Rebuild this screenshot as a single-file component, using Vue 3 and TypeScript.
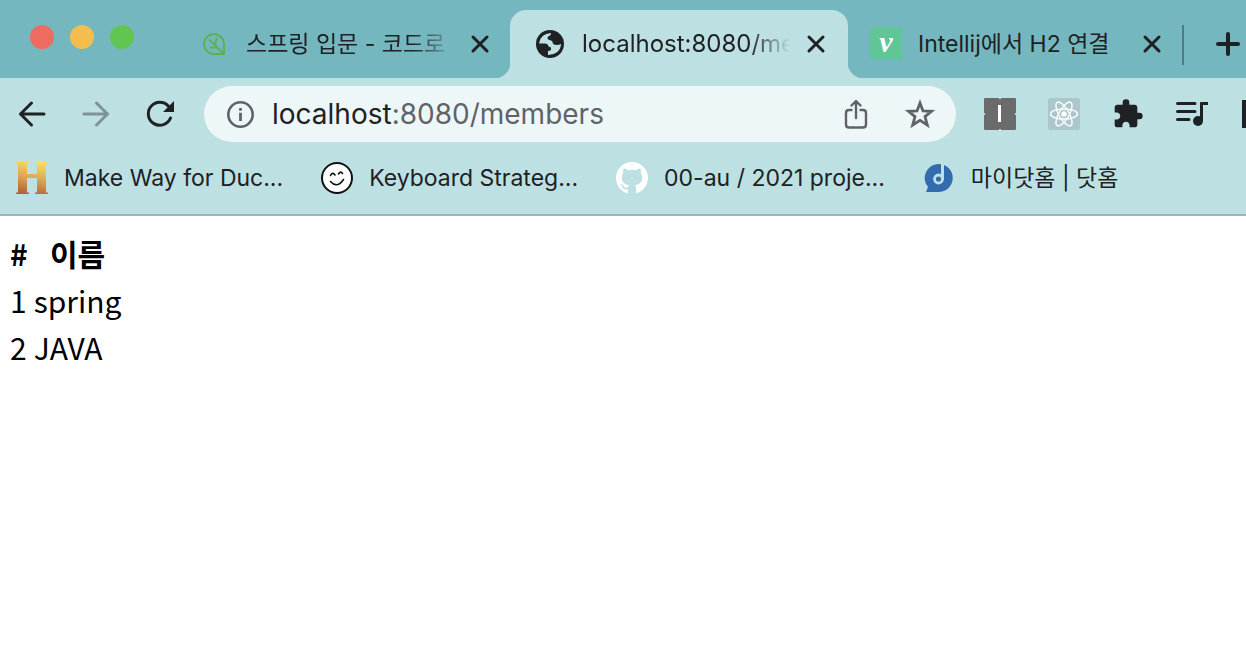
<script setup lang="ts">
interface Member { id: number; name: string }

const members: Member[] = [
  { id: 1, name: 'spring' },
  { id: 2, name: 'JAVA' },
]
</script>

<template>
  <div class="window">
    <header class="tabstrip">
      <div class="lights">
        <button class="light red" aria-label="Close window"></button>
        <button class="light amber" aria-label="Minimise window"></button>
        <button class="light green" aria-label="Zoom window"></button>
      </div>
      <div class="tab">
        <svg class="fav" viewBox="0 0 32 32" fill="none" stroke="#5cb155" stroke-width="2">
          <path d="M26 26H15.500A10 10 0 1 1 26 15.500Z" />
          <path d="M25 25L11 11.500M17 17L19 9.500M18.500 19.500H11.500" />
        </svg>
        <span class="title fade" lang="ko">스프링 입문 - 코드로 배</span>
        <button class="close" aria-label="Close tab"><svg viewBox="0 0 20 20"><path d="M3 3L17 17M17 3L3 17" /></svg></button>
      </div>
      <div class="tab active">
        <svg class="fav" viewBox="0 0 32 32">
          <circle cx="16" cy="16" r="14" fill="#202124" />
          <path d="M5 15.500Q6 6 17 5Q17 7.500 14 8.500Q12.500 11 15.500 12Q19 12.500 19 16Q23 18 27 16Q26.500 26 14 27V23Q17.500 23 17 20.500Q17 18.500 14.500 18.500Q14 15.500 11 15.500Z" fill="#bde0e2" />
        </svg>
        <span class="title fade">localhost:8080/members</span>
        <button class="close" aria-label="Close tab"><svg viewBox="0 0 20 20"><path d="M3 3L17 17M17 3L3 17" /></svg></button>
      </div>
      <div class="tab">
        <span class="fav velog">v</span>
        <span class="title" lang="ko">Intellij에서 H2 연결</span>
        <button class="close" aria-label="Close tab"><svg viewBox="0 0 20 20"><path d="M3 3L17 17M17 3L3 17" /></svg></button>
      </div>
      <span class="divider"></span>
      <button class="new" aria-label="New tab"><svg viewBox="0 0 24 24"><path d="M12 2V22M2 12H22" /></svg></button>
    </header>

    <nav class="toolbar">
      <button class="tool" aria-label="Back"><svg viewBox="0 0 32 32" class="line"><path d="M28 16H4.500M15.500 5L4.500 16L15.500 27" /></svg></button>
      <button class="tool faded" aria-label="Forward"><svg viewBox="0 0 32 32" class="line"><path d="M4 16H27.500M16.500 5L27.500 16L16.500 27" /></svg></button>
      <button class="tool" aria-label="Reload">
        <svg viewBox="0 0 32 32"><path d="M26.500 20A11.500 11.500 0 1 1 24.500 8.200" fill="none" stroke="#202124" stroke-width="3" stroke-linecap="round" /><path d="M30 3V14H19Z" fill="#202124" /></svg>
      </button>
      <div class="omnibox">
        <button class="tool" aria-label="Site information">
          <svg viewBox="0 0 32 32"><circle cx="16.500" cy="16.500" r="12.200" fill="none" stroke="#5f6368" stroke-width="2.600" /><path d="M15.100 10H17.900V12.700H15.100ZM15.100 14.700H17.900V23H15.100Z" fill="#5f6368" /></svg>
        </button>
        <div class="address" role="textbox" aria-label="Address">localhost<span>:8080/members</span></div>
        <button class="tool" aria-label="Share">
          <svg viewBox="0 0 32 32" fill="none" stroke="#5f6368" stroke-width="2.400" stroke-linecap="round" stroke-linejoin="round"><path d="M11.500 12H9Q6 12 6 15V26.500Q6 29.500 9 29.500H23Q26 29.500 26 26.500V15Q26 12 23 12H20.500M16 20V3.500M11.500 7.500L16 3L20.500 7.500" /></svg>
        </button>
        <button class="tool" aria-label="Bookmark this page">
          <svg viewBox="0 0 32 32"><path d="M16 5L19 12.900L27.500 13.300L21 18.600L23.300 27L16 22.300L8.700 27L11 18.600L4.500 13.300L13 12.900Z" fill="none" stroke="#5f6368" stroke-width="2.800" /></svg>
        </button>
      </div>
      <button class="tool" aria-label="Extension">
        <svg viewBox="0 0 32 32"><rect width="32" height="32" rx="1" fill="#6b6b6b" /><path d="M15 0H17V1H15ZM15 31H17V32H15ZM0 15H1V17H0ZM31 15H32V17H31Z" fill="#bde0e2" /><path d="M14 7H17V24H14Z" fill="#fff" /></svg>
      </button>
      <button class="tool" aria-label="React developer tools">
        <svg viewBox="0 0 32 32"><rect width="32" height="32" rx="2" fill="#abc7cc" /><g fill="none" stroke="#fff" stroke-width="1.400"><ellipse cx="16" cy="16" rx="13.500" ry="5" /><ellipse cx="16" cy="16" rx="13.500" ry="5" transform="rotate(60 16 16)" /><ellipse cx="16" cy="16" rx="13.500" ry="5" transform="rotate(120 16 16)" /></g><circle cx="16" cy="16" r="2.700" fill="#fff" /></svg>
      </button>
      <button class="tool" aria-label="Extensions">
        <svg viewBox="0 0 24 24"><path d="M20.500 11H19V7c0-1.100-.9-2-2-2h-4V3.500a2.500 2.500 0 0 0-5 0V5H4c-1.100 0-1.990.9-1.990 2v3.800H3.500c1.490 0 2.700 1.210 2.700 2.700s-1.210 2.700-2.700 2.700H2V20c0 1.100.9 2 2 2h3.800v-1.500c0-1.490 1.210-2.700 2.700-2.700s2.700 1.210 2.700 2.700V22H17c1.100 0 2-.9 2-2v-4h1.500a2.500 2.500 0 0 0 0-5z" fill="#202124" /></svg>
      </button>
      <button class="tool" aria-label="Media controls">
        <svg viewBox="0 0 32 32"><path d="M1.500 5.500H19M1.500 13.500H19M1.500 21.500H13" fill="none" stroke="#202124" stroke-width="3" stroke-linecap="round" /><circle cx="22" cy="23" r="5" fill="#202124" /><path d="M24 23V5Q24 4 25 4H32V7H27V23Z" fill="#202124" /></svg>
      </button>
      <button class="tool" aria-label="Side panel"><svg viewBox="0 0 32 32"><path d="M2 2H30V30H2Z" fill="#202124" /></svg></button>
    </nav>

    <nav class="bookmarks">
      <a href="#">
        <svg viewBox="0 0 32 32"><defs><linearGradient id="gold" x1="0.600" y1="0" x2="0.400" y2="1"><stop offset="0" stop-color="#f6dc63" /><stop offset="0.500" stop-color="#dda653" /><stop offset="1" stop-color="#b46336" /></linearGradient></defs><path d="M0 0H13V1.500H11V12H21V1.500H19V0H32V1.500H30V30.500H32V32H19V30.500H21V16H11V30.500H13V32H0V30.500H2V1.500H0Z" fill="url(#gold)" /></svg>
        <span>Make Way for Duc...</span>
      </a>
      <a href="#">
        <svg viewBox="0 0 32 32"><circle cx="16" cy="16" r="15" fill="#fff" stroke="#111" stroke-width="2" /><path d="M9.500 13.500Q11.500 9.500 14 13M17.500 12Q19.500 8.500 21.500 11.500M9.500 19.500Q16 27 22.500 17.500" fill="none" stroke="#111" stroke-width="1.600" stroke-linecap="round" /></svg>
        <span>Keyboard Strateg...</span>
      </a>
      <a href="#">
        <svg viewBox="0 0 16 16"><path d="M8 0C3.580 0 0 3.580 0 8c0 3.540 2.290 6.530 5.470 7.590.4.070.55-.17.55-.38 0-.19-.01-.82-.01-1.490-2.010.37-2.530-.49-2.690-.94-.09-.23-.48-.94-.82-1.130-.28-.15-.68-.52-.01-.53.63-.01 1.080.58 1.230.82.72 1.210 1.870.87 2.330.66.07-.52.28-.87.51-1.070-1.780-.2-3.640-.89-3.640-3.950 0-.87.31-1.590.82-2.150-.08-.2-.36-1.020.08-2.120 0 0 .67-.21 2.200.82.64-.18 1.320-.27 2-.27s1.360.09 2 .27c1.530-1.040 2.200-.82 2.200-.82.44 1.100.16 1.920.08 2.120.51.56.82 1.270.82 2.150 0 3.070-1.870 3.750-3.650 3.950.29.25.54.73.54 1.480 0 1.070-.01 1.930-.01 2.200 0 .21.15.46.55.38A8.010 8.010 0 0 0 16 8c0-4.420-3.580-8-8-8z" fill="#fff" /></svg>
        <span>00-au / 2021 proje...</span>
      </a>
      <a href="#">
        <svg viewBox="0 0 32 32"><path d="M3 30L5 25A14 14 0 1 1 16 30Z" fill="#326bae" /><circle cx="15.500" cy="17" r="4" fill="none" stroke="#bde0e2" stroke-width="2.800" /><path d="M19.500 2V18" fill="none" stroke="#bde0e2" stroke-width="3" /></svg>
        <span>마이닷홈 | 닷홈</span>
      </a>
    </nav>

    <main class="page">
      <table>
        <thead><tr><th>#</th><th>이름</th></tr></thead>
        <tbody>
          <tr v-for="member in members" :key="member.id"><td>{{ member.id }}</td><td>{{ member.name }}</td></tr>
        </tbody>
      </table>
    </main>
  </div>
</template>

<style>
body { margin: 0; background: #fff; }
</style>

<style scoped>
.window { min-height: 100vh; overflow: hidden; font-family: Inter, "Noto Sans CJK KR", sans-serif; font-size: 24px; color: #202124; }
svg { display: block; width: 100%; height: 100%; }
button { border: 0; padding: 0; background: none; flex: none; color: inherit; }
.tabstrip { display: flex; height: 78px; box-sizing: border-box; padding-top: 10px; background: #74b7bf; }
.lights { display: flex; gap: 16px; flex: none; padding: 15px 40px 0 30px; }
.light { width: 24px; height: 24px; border-radius: 50%; }
.red { background: #ed6b5f; }
.amber { background: #f4be4f; }
.green { background: #61c554; }
.tab { position: relative; display: flex; align-items: center; flex: none; width: 336px; height: 68px; box-sizing: border-box; padding: 0 20px 0 24px; border-radius: 16px 16px 0 0; }
.tab.active { width: 338px; margin-right: -2px; padding-right: 22px; background: #bde0e2; }
.tab.active::before, .tab.active::after { content: ""; position: absolute; bottom: 0; width: 16px; height: 16px; }
.tab.active::before { right: 100%; background: radial-gradient(circle at 0 0, #74b7bf 16px, #bde0e2 17px); }
.tab.active::after { left: 100%; background: radial-gradient(circle at 100% 0, #74b7bf 16px, #bde0e2 17px); }
.fav { width: 32px; height: 32px; flex: none; }
.velog { border-radius: 3px; background: #60c697; color: #fff; font: italic bold 30px/28px "Liberation Serif", serif; text-align: center; }
.title { flex: 1; min-width: 0; margin-left: 16px; overflow: hidden; white-space: nowrap; line-height: 36px; }
.title:lang(ko) { font-size: 23px; }
.fade { mask-image: linear-gradient(to right, #000 calc(100% - 42px), transparent); }
.close { width: 20px; height: 20px; margin-left: 16px; }
.close path, .new path { fill: none; stroke: #202124; stroke-width: 3; stroke-linecap: round; }
.divider { flex: none; width: 2px; height: 40px; margin-top: 15px; background: #4f7c82; }
.new { width: 24px; height: 24px; margin: 22px 0 0 32px; }
.new path { stroke-width: 4; }
.toolbar { display: flex; align-items: center; gap: 32px; height: 72px; padding-left: 16px; background: #bde0e2; }
.tool { width: 32px; height: 32px; }
.line { fill: none; stroke: #202124; stroke-width: 3; stroke-linecap: round; stroke-linejoin: round; }
.faded { opacity: .4; }
.omnibox { display: flex; align-items: center; flex: none; width: calc(100% - 478px); min-width: 560px; height: 56px; box-sizing: border-box; margin: 0 -4px; padding: 0 20px; gap: 32px; border-radius: 28px; background: #eef7f8; }
.address { flex: 1; margin-left: -16px; font-size: 28px; line-height: 36px; white-space: nowrap; }
.address span { color: #5f6368; }
.bookmarks { display: flex; align-items: center; gap: 38px; height: 56px; padding: 0 16px 8px; border-bottom: 2px solid #9ab4b8; background: #bde0e2; font-size: 23px; }
.bookmarks a { display: flex; align-items: center; gap: 16px; flex: none; color: inherit; text-decoration: none; line-height: 36px; white-space: nowrap; }
.bookmarks svg { width: 32px; height: 32px; flex: none; }
.page { padding: 12px 5px; color: #000; font-family: "Noto Sans CJK KR", sans-serif; font-size: 30px; line-height: 41px; }
table { border-spacing: 4px; }
th, td { padding: 1px; text-align: left; }
th { text-align: center; }
</style>
